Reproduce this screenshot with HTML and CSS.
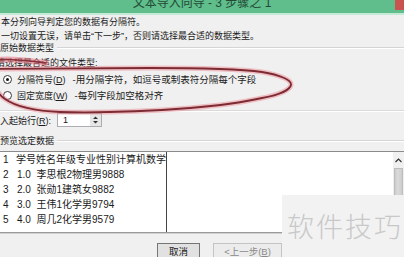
FILE: index.html
```html
<!DOCTYPE html>
<html lang="zh-CN">
<head>
    <meta charset="UTF-8">
    <meta name="viewport" content="width=device-width, initial-scale=1.0">
    <title>文本导入向导 - 3 步骤之 1</title>
    <link rel="stylesheet" href="styles.css">
</head>
<body>
<div class="dialog">
    <div class="titlebar">
        <span class="title">文本导入向导 - 3 步骤之 1</span>
        <span class="close"></span>
    </div>

    <div class="intro">
        <p>本分列向导判定您的数据有分隔符。</p>
        <p>一切设置无误，请单击“下一步”，否则请选择最合适的数据类型。</p>
    </div>

    <div class="group-head"><span>原始数据类型</span></div>
    <p class="prompt">请选择最合适的文件类型:</p>

    <div class="radio-row">
        <span class="radio checked"></span>
        <span class="radio-name">分隔符号(<u>D</u>)</span>
        <span class="radio-desc">-用分隔字符，如逗号或制表符分隔每个字段</span>
    </div>
    <div class="radio-row">
        <span class="radio"></span>
        <span class="radio-name">固定宽度(<u>W</u>)</span>
        <span class="radio-desc">-每列字段加空格对齐</span>
    </div>

    <div class="sep"></div>

    <div class="start-row">
        <span>导入起始行(<u>R</u>):</span>
        <span class="spin-box">
            <span class="spin-val">1</span>
            <span class="spin-btn">
                <svg width="7" height="10" viewBox="0 0 7 10"><path d="M1 4 L3.5 1.5 L6 4 Z M1 6 L3.5 8.5 L6 6 Z" fill="#333"/></svg>
            </span>
        </span>
    </div>

    <div class="group-head preview-head"><span>预览选定数据</span></div>

    <div class="preview">
        <div class="preview-data">
            <div class="row"><span class="num">1</span><span>学号姓名年级专业性别计算机数学</span></div>
            <div class="row"><span class="num">2</span><span>1.0  李思根2物理男9888</span></div>
            <div class="row"><span class="num">3</span><span>2.0  张勋1建筑女9882</span></div>
            <div class="row"><span class="num">4</span><span>3.0  王伟1化学男9794</span></div>
            <div class="row"><span class="num">5</span><span>4.0  周几2化学男9579</span></div>
        </div>
        <div class="scrollbar">
            <svg class="arrow" width="7" height="5" viewBox="0 0 7 5"><path d="M0.5 4 L3.5 1 L6.5 4" fill="none" stroke="#333" stroke-width="1.2"/></svg>
            <span class="thumb"></span>
        </div>
    </div>

    <div class="buttons">
        <button class="btn primary">取消</button>
        <button class="btn off">&lt;上一步(<u>B</u>)</button>
    </div>

    <!-- hand-drawn red circle over the file type options -->
    <svg class="mark" width="404" height="257" viewBox="0 0 404 257">
        <g fill="none" stroke-linecap="round" stroke-linejoin="round">
            <path d="M-2 60 C 12 58, 30 61, 46 63" stroke="rgba(230,120,135,0.55)" stroke-width="6"/>
            <path d="M-2 60 C 12 58, 30 61, 46 63" stroke="#8a2f38" stroke-width="1.6"/>
            <path d="M-4 69 L 150 68 C 190 68, 240 69, 262 72 C 280 75, 292 80, 291 85 C 290 90, 278 95, 262 98 C 240 103, 215 106, 190 108 C 150 111, 100 113, 60 112 C 35 111, 15 106, 5 99 C 2 97, 0 95, -2 92" stroke="rgba(236,140,150,0.5)" stroke-width="5"/>
            <path d="M-4 69 L 150 68 C 190 68, 240 69, 262 72 C 280 75, 292 80, 291 85 C 290 90, 278 95, 262 98 C 240 103, 215 106, 190 108 C 150 111, 100 113, 60 112 C 35 111, 15 106, 5 99 C 2 97, 0 95, -2 92" stroke="#7d2b33" stroke-width="1.8"/>
        </g>
    </svg>

    <div class="watermark">软件技巧</div>
</div>
</body>
</html>
```

FILE: styles.css
```css
body {
    margin: 0;
    width: 404px;
    height: 257px;
    overflow: hidden;
    background: #f0f0f0;
    font-family: "Liberation Sans", "Noto Sans CJK SC", sans-serif;
    font-size: 9px;
    color: #1a1a1a;
}
.dialog {
    position: relative;
    height: 257px;
    overflow: hidden;
}
.titlebar {
    position: relative;
    height: 13px;
    background: #5fbe8b;
    border-bottom: 2px solid #c4ead6;
    text-align: center;
    overflow: hidden;
}
.title {
    display: block;
    font-size: 12px;
    line-height: 13px;
    margin-top: -3px;
    color: #234a36;
}
.close {
    position: absolute;
    right: 0;
    top: 0;
    width: 9px;
    height: 10px;
    background: #c9534f;
}
.intro {
    padding-left: 1px;
}
.intro p {
    margin: 0;
    line-height: 14px;
    white-space: nowrap;
}
.group-head {
    display: flex;
    align-items: center;
    height: 10px;
    line-height: 10px;
    white-space: nowrap;
}
.group-head::after {
    content: "";
    flex: 1;
    margin-left: 3px;
    border-top: 1px solid #d5d5d5;
    border-bottom: 1px solid #fff;
}
.prompt {
    margin: 3px 0 0 -4px;
    line-height: 14px;
    white-space: nowrap;
}
.radio-row {
    display: flex;
    align-items: center;
    height: 14px;
    margin-top: 2px;
    white-space: nowrap;
}
.radio {
    position: relative;
    width: 9px;
    height: 9px;
    margin: 0 5px 0 3px;
    box-sizing: border-box;
    border: 1px solid #3a3a3a;
    border-radius: 50%;
    background: #fff;
}
.radio.checked::after {
    content: "";
    position: absolute;
    left: 2px;
    top: 2px;
    width: 3px;
    height: 3px;
    border-radius: 50%;
    background: #111;
}
.radio-desc {
    margin-left: 7px;
    font-size: 9.5px;
}
.sep {
    margin-top: 8px;
    border-top: 1px solid #dadada;
    border-bottom: 1px solid #fff;
}
.start-row {
    display: flex;
    align-items: center;
    height: 14px;
    margin: 1px 0 0 -9px;
    white-space: nowrap;
}
.spin-box {
    display: flex;
    align-items: center;
    justify-content: space-between;
    width: 45px;
    height: 14px;
    margin-left: 6px;
    box-sizing: border-box;
    border: 1px solid #abadb3;
    background: #fff;
}
.spin-val {
    padding-left: 5px;
}
.spin-btn {
    display: flex;
    align-items: center;
    justify-content: center;
    width: 11px;
    height: 12px;
    background: #e6e6e6;
}
.preview-head {
    height: 14px;
    line-height: 14px;
    margin-top: 7px;
}
.preview {
    display: flex;
    justify-content: space-between;
    height: 80px;
    margin-top: 3px;
    border-top: 1px solid #8b8b8b;
    border-bottom: 1px solid #9a9a9a;
    box-shadow: 0 1px 0 #d0d0d0;
    background: #fff;
}
.preview-data {
    width: 166px;
    border-right: 1px solid #444;
    font-size: 10px;
}
.row {
    display: flex;
    height: 15px;
    line-height: 15px;
    white-space: pre;
}
.num {
    width: 17px;
    padding-left: 3px;
    box-sizing: border-box;
}
.scrollbar {
    display: flex;
    flex-direction: column;
    align-items: center;
    width: 11px;
    background: #f0f0f0;
}
.arrow {
    margin-top: 6px;
}
.thumb {
    width: 9px;
    height: 28px;
    margin-top: 5px;
    box-sizing: border-box;
    border: 1px solid #bcbcbc;
    background: linear-gradient(to right, #cdcdcd, #dadada 40%, #cdcdcd);
}
.buttons {
    display: flex;
    gap: 13px;
    margin-top: 10px;
    padding-left: 157px;
}
.btn {
    height: 17px;
    padding: 0;
    box-sizing: border-box;
    font: inherit;
    font-size: 9.5px;
    line-height: 14px;
    border: 1px solid #adadad;
    background: #e1e1e1;
    color: #1a1a1a;
}
.btn.primary {
    width: 43px;
    border-color: #767676;
}
.btn.off {
    width: 69px;
    color: #8a8a8a;
    background: #ececec;
    border-color: #c4c4c4;
}
.mark {
    position: absolute;
    left: 0;
    top: 0;
    pointer-events: none;
    z-index: 2;
}
.watermark {
    position: absolute;
    right: 0;
    bottom: 0;
    width: 122px;
    height: 62px;
    box-sizing: border-box;
    padding: 17px 0 0 5px;
    background: #f2f2f2;
    font-family: "Noto Sans CJK SC", sans-serif;
    font-weight: 300;
    font-size: 27px;
    line-height: 27px;
    letter-spacing: 2px;
    color: #c8c8c8;
    white-space: nowrap;
}
```
